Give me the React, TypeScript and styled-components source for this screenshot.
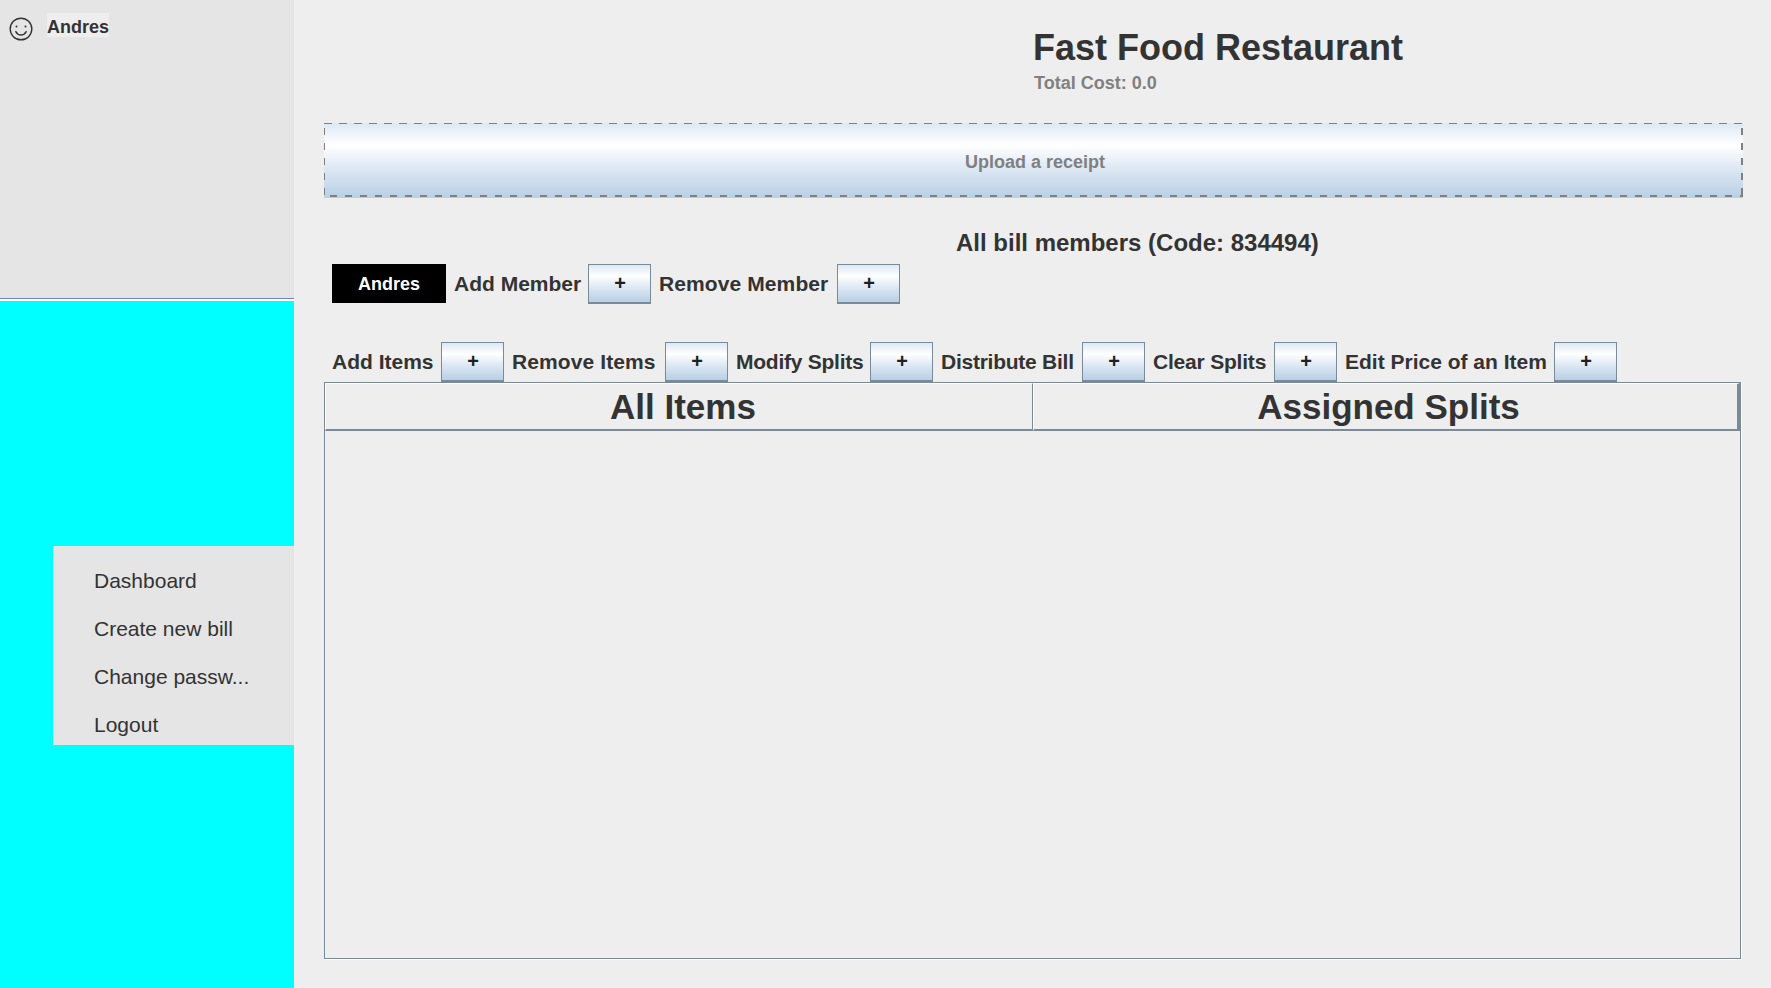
import React, { FC } from "react";
import styled, { createGlobalStyle } from "styled-components";

const GlobalStyle = createGlobalStyle`
  html, body {
    margin: 0;
    padding: 0;
    background: #eeeeee;
  }
  body {
    font-family: "Liberation Sans", Arial, sans-serif;
    color: #333333;
  }
`;

const metalGradient = "linear-gradient(180deg, #dde8f3 0%, #ffffff 30%, #dde8f3 60%, #b8cfe5 100%)";
const metalBorder = "#7a8a99";

const Frame = styled.div`
  display: flex;
  width: 1771px;
  height: 988px;
  overflow: hidden;
`;

const Sidebar = styled.aside`
  display: flex;
  flex-direction: column;
  flex: 0 0 294px;
`;

const UserPanel = styled.div`
  display: flex;
  align-items: flex-start;
  box-sizing: border-box;
  height: 301px;
  padding: 13px 0 0 9px;
  background: #e5e5e5;
  border-bottom: 2px solid #ffffff;
  box-shadow: inset 0 -1px 0 #6c83c4;
`;

const Avatar = styled.svg`
  width: 24px;
  height: 24px;
  margin: 4px 14px 0 0;
`;

const UserName = styled.span`
  height: 24px;
  line-height: 28px;
  font-size: 18px;
  font-weight: bold;
  background: #eeeeee;
`;

const MenuArea = styled.div`
  flex: 1;
  padding: 245px 0 0 53px;
  background: #00ffff;
`;

const Menu = styled.nav`
  display: flex;
  flex-direction: column;
  box-sizing: border-box;
  height: 199px;
  padding: 11px 0 0 41px;
  background: #e5e5e5;
`;

const MenuItem = styled.div`
  height: 48px;
  line-height: 48px;
  font-size: 21px;
`;

const Main = styled.main`
  display: flex;
  flex-direction: column;
  flex: 1;
  padding: 27px 28px 29px 30px;
  background: #eeeeee;
`;

const TitleBlock = styled.header`
  margin-left: 709px;
`;

const Title = styled.h1`
  margin: 0;
  line-height: 42px;
  font-size: 36px;
  font-weight: bold;
`;

const TotalCost = styled.div`
  margin: 3px 0 0 1px;
  line-height: 22px;
  font-size: 18px;
  font-weight: bold;
  color: #808080;
`;

const UploadBar = styled.div`
  display: flex;
  align-items: center;
  justify-content: center;
  height: 75px;
  margin-top: 29px;
  padding: 3px 0 0 3px;
  box-sizing: border-box;
  font-size: 18px;
  font-weight: bold;
  color: #808080;
  background:
    repeating-linear-gradient(90deg, #808080 0 8px, transparent 8px 15px) 0 0 / 100% 1px no-repeat,
    repeating-linear-gradient(90deg, transparent 0 6px, #808080 6px 13px, transparent 13px 15px) 0 calc(100% - 1px) / 100% 2px no-repeat,
    repeating-linear-gradient(180deg, transparent 0 5px, #808080 5px 12px, transparent 12px 15px) 0 0 / 1px 100% no-repeat,
    repeating-linear-gradient(180deg, transparent 0 5px, #808080 5px 12px, transparent 12px 15px) 100% 0 / 2px calc(100% - 2px) no-repeat,
    ${metalGradient};
`;

const MembersHeading = styled.h2`
  margin: 31px 0 0 632px;
  line-height: 28px;
  font-size: 24px;
  font-weight: bold;
`;

const ToolRow = styled.div<{ $top: number }>`
  display: flex;
  align-items: center;
  height: 40px;
  margin-top: ${p => p.$top}px;
  padding-left: 8px;
`;

const MemberChip = styled.div`
  display: flex;
  align-items: center;
  justify-content: center;
  width: 114px;
  height: 39px;
  padding-top: 2px;
  box-sizing: border-box;
  margin-right: 8px;
  align-self: flex-start;
  font-size: 18px;
  font-weight: bold;
  color: #ffffff;
  background: #000000;
`;

const ToolLabel = styled.span<{ $width: number; $spacing?: number }>`
  flex: 0 0 ${p => p.$width}px;
  font-size: 21px;
  font-weight: bold;
  letter-spacing: ${p => p.$spacing ?? 0}px;
  white-space: nowrap;
`;

const PlusButton = styled.button`
  flex: 0 0 auto;
  width: 63px;
  height: 40px;
  margin-right: 8px;
  padding: 0 0 0 1px;
  box-sizing: border-box;
  border: 1px solid ${metalBorder};
  border-bottom-width: 2px;
  border-radius: 0;
  font-family: inherit;
  font-size: 20px;
  font-weight: bold;
  color: #1f1f1f;
  background: ${metalGradient};
`;

const ItemsTable = styled.section`
  display: flex;
  flex-direction: column;
  flex: 1;
  width: 1417px;
  box-sizing: border-box;
  border: 1px solid ${metalBorder};
  box-shadow: 1px 1px 0 #ffffff;
`;

const TableHead = styled.div`
  display: grid;
  grid-template-columns: 708px 1fr;
  height: 48px;
`;

const HeadCell = styled.div<{ $offset: number }>`
  display: flex;
  align-items: center;
  justify-content: center;
  box-sizing: border-box;
  padding-left: ${p => p.$offset}px;
  padding-top: 1px;
  font-size: 35px;
  font-weight: bold;
  border-top: 1px solid #ffffff;
  border-left: 1px solid #ffffff;
  border-right: 1px solid ${metalBorder};
  border-bottom: 2px solid ${metalBorder};

  &:last-child {
    border-right-width: 3px;
  }
`;

const actions = [
  { label: "Add Items", width: 109 },
  { label: "Remove Items", width: 153, spacing: 0.1 },
  { label: "Modify Splits", width: 134, spacing: -0.25 },
  { label: "Distribute Bill", width: 141, spacing: -0.25 },
  { label: "Clear Splits", width: 121, spacing: -0.2 },
  { label: "Edit Price of an Item", width: 209 },
];

const menuItems = ["Dashboard", "Create new bill", "Change passw...", "Logout"];

const SmileIcon: FC = () => (
  <Avatar viewBox="0 0 24 24" fill="none" stroke="#333333" strokeWidth="1.4">
    <circle cx="12" cy="12" r="10.8" />
    <circle cx="7.5" cy="9.5" r="1" fill="#333333" stroke="none" />
    <circle cx="16.5" cy="9.5" r="1" fill="#333333" stroke="none" />
    <path d="M6.8 14.6c1.2 2.3 3 3.4 5.2 3.4s4-1.1 5.2-3.4" strokeLinecap="round" />
  </Avatar>
);

const App: FC = () => (
  <>
    <GlobalStyle />
    <Frame>
      <Sidebar>
        <UserPanel>
          <SmileIcon />
          <UserName>Andres</UserName>
        </UserPanel>
        <MenuArea>
          <Menu>
            {menuItems.map(item => (
              <MenuItem key={item}>{item}</MenuItem>
            ))}
          </Menu>
        </MenuArea>
      </Sidebar>
      <Main>
        <TitleBlock>
          <Title>Fast Food Restaurant</Title>
          <TotalCost>Total Cost: 0.0</TotalCost>
        </TitleBlock>
        <UploadBar>Upload a receipt</UploadBar>
        <MembersHeading>All bill members (Code: 834494)</MembersHeading>
        <ToolRow $top={7}>
          <MemberChip>Andres</MemberChip>
          <ToolLabel $width={134}>Add Member</ToolLabel>
          <PlusButton>+</PlusButton>
          <ToolLabel $width={178} $spacing={0.1}>Remove Member</ToolLabel>
          <PlusButton>+</PlusButton>
        </ToolRow>
        <ToolRow $top={38}>
          {actions.map(action => (
            <React.Fragment key={action.label}>
              <ToolLabel $width={action.width} $spacing={action.spacing}>{action.label}</ToolLabel>
              <PlusButton>+</PlusButton>
            </React.Fragment>
          ))}
        </ToolRow>
        <ItemsTable>
          <TableHead>
            <HeadCell $offset={8}>All Items</HeadCell>
            <HeadCell $offset={6}>Assigned Splits</HeadCell>
          </TableHead>
        </ItemsTable>
      </Main>
    </Frame>
  </>
);

export default App;
